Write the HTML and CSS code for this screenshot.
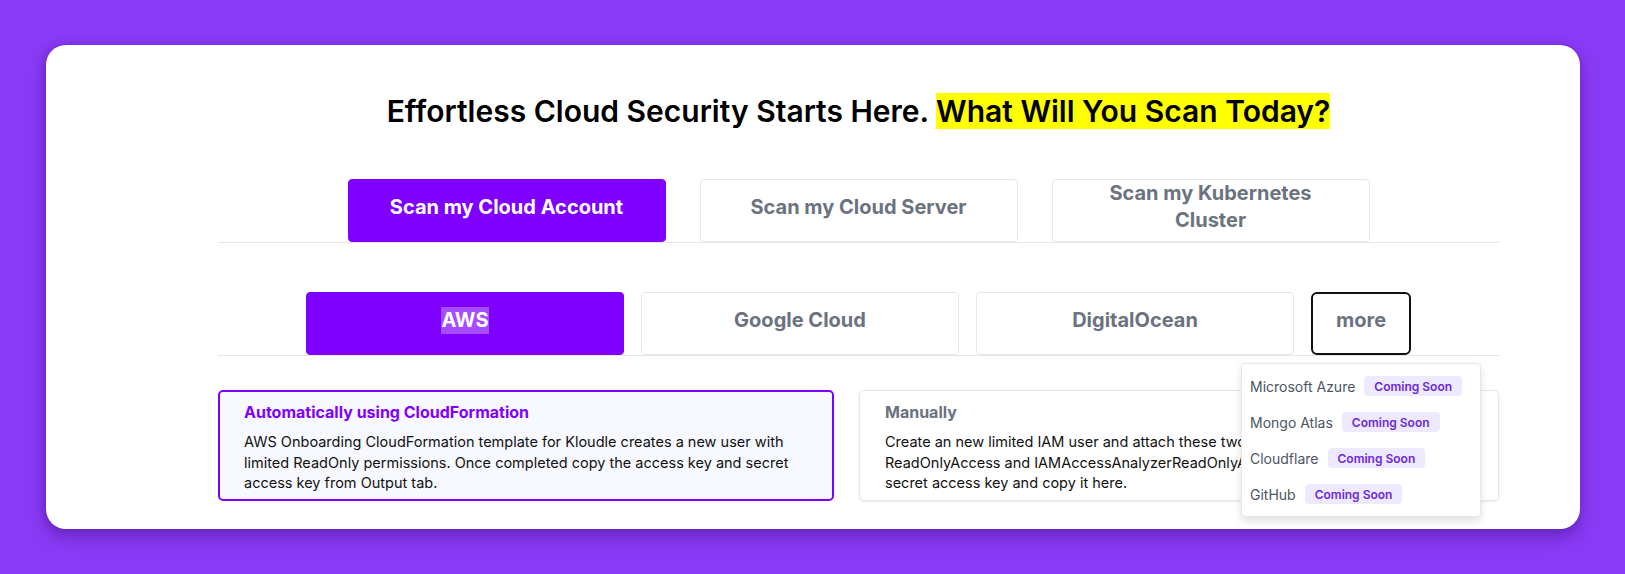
FILE: index.html
```html
<!DOCTYPE html>
<html lang="en">
<head>
<meta charset="utf-8">
<title>Kloudle - What will you scan today?</title>
<link rel="stylesheet" href="styles.css">
</head>
<body>
  <main class="card">
    <div class="content">
      <h1 class="title">Effortless Cloud Security Starts Here. <span class="highlight">What Will You Scan Today?</span></h1>

      <div class="tabs tabs-main">
        <button class="tab tab-wide active">Scan my Cloud Account</button>
        <button class="tab tab-wide">Scan my Cloud Server</button>
        <button class="tab tab-wide">Scan my Kubernetes Cluster</button>
      </div>

      <div class="tabs tabs-provider">
        <button class="tab tab-wide active"><span class="selected">AWS</span></button>
        <button class="tab tab-wide">Google Cloud</button>
        <button class="tab tab-wide">DigitalOcean</button>
        <div class="more-wrap">
          <button class="tab tab-more">more</button>
          <ul class="dropdown">
            <li class="dropdown-item"><span class="item-name">Microsoft Azure</span><span class="badge">Coming Soon</span></li>
            <li class="dropdown-item"><span class="item-name">Mongo Atlas</span><span class="badge">Coming Soon</span></li>
            <li class="dropdown-item"><span class="item-name">Cloudflare</span><span class="badge">Coming Soon</span></li>
            <li class="dropdown-item"><span class="item-name">GitHub</span><span class="badge">Coming Soon</span></li>
          </ul>
        </div>
      </div>

      <div class="methods">
        <section class="method method-active">
          <h2 class="method-title">Automatically using CloudFormation</h2>
          <p class="method-text">AWS Onboarding CloudFormation template for Kloudle creates a new user with limited ReadOnly permissions. Once completed copy the access key and secret access key from Output tab.</p>
        </section>
        <section class="method">
          <h2 class="method-title">Manually</h2>
          <p class="method-text">Create an new limited IAM user and attach these two AWS managed policies ReadOnlyAccess and IAMAccessAnalyzerReadOnlyAccess. Create an access key and secret access key and copy it here.</p>
        </section>
      </div>
    </div>
  </main>
</body>
</html>
```

FILE: styles.css
```css
* {
  box-sizing: border-box;
}

html, body {
  margin: 0;
}

body {
  background: #8a3af5;
  padding: 45px 45px 45px 46px;
  font-family: Inter, "Noto Sans", "Liberation Sans", sans-serif;
  color: #000;
}

.card {
  background: #fff;
  border-radius: 20px;
  padding: 48px 81px 28px 172px;
  box-shadow: 0 8px 16px rgba(50, 10, 110, 0.35), -2px 0 8px rgba(50, 10, 110, 0.2);
}

.content {
  width: 1281px;
}

.title {
  margin: 0;
  text-align: center;
  font-size: 30px;
  font-weight: 600;
  line-height: normal;
}

.highlight {
  background: #ffff00;
}

.tabs {
  display: flex;
  justify-content: center;
  border-bottom: 1px solid #e5e7eb;
}

.tabs-main {
  margin-top: 50px;
  gap: 34px;
}

.tabs-provider {
  margin-top: 49px;
  gap: 17px;
}

.tab {
  height: 63px;
  padding: 0 20px 7px;
  display: flex;
  align-items: center;
  justify-content: center;
  background: #fff;
  border: 1px solid #e5e7eb;
  border-radius: 4px;
  font-family: inherit;
  font-size: 20px;
  font-weight: 700;
  line-height: 27px;
  color: #6b7280;
  text-align: center;
  cursor: pointer;
}

.tab-wide {
  width: 318px;
}

.tab.active {
  background: #7f00ff;
  border-color: #7f00ff;
  color: #fff;
}

.selected {
  background: #a64cff;
}

.more-wrap {
  position: relative;
}

.tab-more {
  width: 100px;
  border: 2px solid #111;
  border-radius: 6px;
}

.dropdown {
  position: absolute;
  top: calc(100% + 8px);
  left: 50%;
  transform: translateX(-50%);
  width: 240px;
  margin: 0;
  padding: 4px 0;
  list-style: none;
  background: #fff;
  border: 1px solid #e5e7eb;
  border-radius: 4px;
  box-shadow: 0 4px 8px rgba(0, 0, 0, 0.12);
  z-index: 5;
}

.dropdown-item {
  display: flex;
  align-items: center;
  gap: 9px;
  padding: 8px 8px;
  height: 36px;
}

.item-name {
  font-size: 14px;
  color: #4b5563;
}

.badge {
  display: inline-flex;
  align-items: center;
  height: 20px;
  padding: 0 10px;
  background: #ede9fe;
  color: #6d28d9;
  font-size: 12px;
  font-weight: 600;
  border-radius: 4px;
}

.methods {
  margin-top: 34px;
  display: grid;
  grid-template-columns: 616fr 640fr;
  gap: 25px;
}

.method {
  border: 1px solid #e5e7eb;
  border-radius: 5px;
  padding: 9px 14px 9px 25px;
  background: #fff;
  box-shadow: 0 1px 3px rgba(0, 0, 0, 0.08);
  height: 111px;
}

.method-active {
  border: 2px solid #7f00ff;
  background: #f8f8ff;
  padding: 8px 13px 8px 24px;
  box-shadow: none;
}

.method-title {
  margin: 0;
  font-size: 16px;
  line-height: 24px;
  font-weight: 700;
  color: #6b7280;
}

.method-active .method-title {
  color: #7f00ff;
}

.method-text {
  margin: 8px 0 0;
  font-size: 14.5px;
  line-height: 20.5px;
  color: #111;
}
```
